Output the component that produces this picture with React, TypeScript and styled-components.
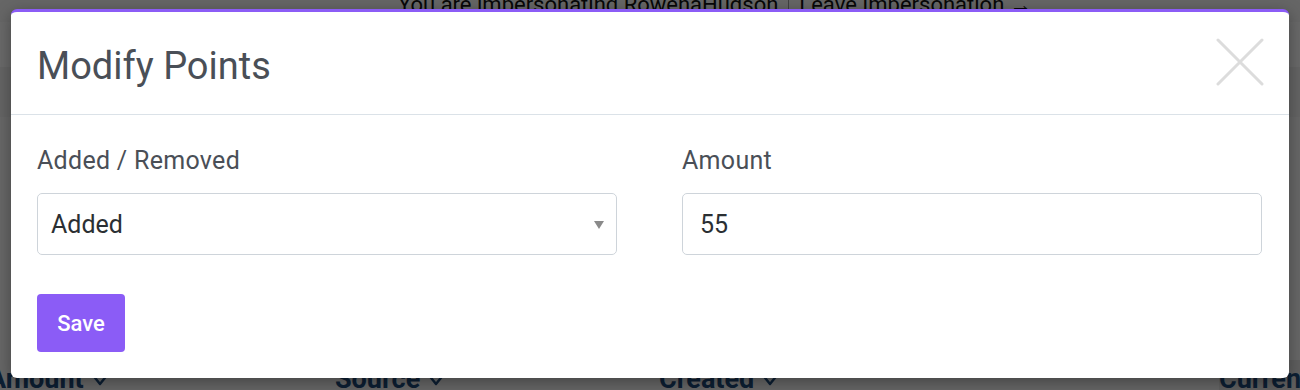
import React from "react";
import styled, { createGlobalStyle } from "styled-components";

const GlobalStyle = createGlobalStyle`
  html, body { margin: 0; padding: 0; background: #ffffff; }
  body { font-family: Roboto, "Liberation Sans", Arial, sans-serif; overflow: hidden; }
  * { box-sizing: border-box; }
`;

const Page = styled.div`
  width: 1300px;
  height: 390px;
  display: grid;
  grid-template-rows: 22px 1fr 30px;
  background: #f4f4f4;
  overflow: hidden;
  position: relative;
`;

const Banner = styled.div`
  display: flex;
  justify-content: flex-start;
  align-items: flex-end;
  gap: 10px;
  font-size: 22px;
  color: #111;
  line-height: 1;
  padding-left: 398px;
  margin-top: -8px;
  padding-bottom: 6px;
`;

const BannerSep = styled.span`
  border-left: 1px solid #999;
  height: 30px;
`;

const MainArea = styled.div`
  display: flex;
  justify-content: flex-end;
  align-items: flex-end;
  padding-bottom: 36px;
  background: linear-gradient(#fafafa 0 45px, #eeeeee 45px 95px, #f6f6f6 95px);
`;

const Burger = styled.div`
  display: flex;
  flex-direction: column;
  gap: 9px;
  width: 14px;
  span {
    display: block;
    height: 4px;
    background: #222;
  }
`;

const TableHead = styled.div`
  display: grid;
  grid-template-columns: 347px 324px 560px 1fr;
  align-items: end;
  margin-left: -12px;
  color: #1e4a7a;
  font-weight: 700;
  font-size: 27px;
  line-height: 1;
`;

const HeadCell = styled.div<{ $shade?: boolean }>`
  display: flex;
  align-items: center;
  gap: 6px;
  height: 30px;
  padding-top: 8px;
  background: ${(p) => (p.$shade ? "#e2e2e2" : "transparent")};
`;

const Overlay = styled.div`
  position: absolute;
  inset: 0;
  background: rgba(0, 0, 0, 0.58);
`;

const Modal = styled.div`
  position: absolute;
  left: 11px;
  top: 9px;
  width: 1278px;
  height: 369px;
  background: #ffffff;
  border-top: 3px solid #8b5cf6;
  border-radius: 6px;
  box-shadow: 0 4px 16px rgba(0, 0, 0, 0.35);
  display: flex;
  flex-direction: column;
  overflow: hidden;
`;

const Header = styled.div`
  height: 103px;
  flex: none;
  display: flex;
  align-items: center;
  justify-content: space-between;
  padding: 0 25px 0 26px;
  border-bottom: 1px solid #dbe2e8;
`;

const Title = styled.h2`
  margin: 0;
  font-size: 38px;
  font-weight: 400;
  color: #4a4f57;
  line-height: 1;
  padding-top: 6px;
`;

const CloseButton = styled.button`
  width: 48px;
  height: 48px;
  padding: 0;
  border: 0;
  background: none;
  cursor: pointer;
  margin-top: -3px;
  svg { display: block; }
`;

const Body = styled.div`
  flex: 1;
  padding: 28px 26px 26px 26px;
  display: flex;
  flex-direction: column;
`;

const FieldRow = styled.div`
  display: grid;
  grid-template-columns: 580px 580px;
  column-gap: 65px;
`;

const Field = styled.div`
  display: flex;
  flex-direction: column;
`;

const Label = styled.label`
  font-size: 25px;
  line-height: 36px;
  letter-spacing: 0.3px;
  color: #4a4f57;
  margin-bottom: 14px;
`;

const SelectBox = styled.div`
  height: 62px;
  border: 1px solid #ced4da;
  border-radius: 5px;
  display: flex;
  align-items: center;
  padding: 0 13px;
  font-size: 25px;
  color: #2b2f33;
`;

const Caret = styled.span`
  margin-left: auto;
  width: 0;
  height: 0;
  border-left: 5px solid transparent;
  border-right: 5px solid transparent;
  border-top: 8px solid #8a8a8a;
  margin-right: -1px;
  margin-top: 2px;
`;

const TextInput = styled.input`
  height: 62px;
  border: 1px solid #ced4da;
  border-radius: 5px;
  padding: 0 17px;
  font-family: Roboto, "Liberation Sans", Arial, sans-serif;
  font-size: 25px;
  color: #2b2f33;
  outline: none;
  width: 100%;
`;

const SaveButton = styled.button`
  margin-top: 39px;
  align-self: flex-start;
  width: 88px;
  height: 58px;
  border: 0;
  border-radius: 4px;
  background: #8b5cf6;
  color: #ffffff;
  font-family: Roboto, "Liberation Sans", Arial, sans-serif;
  font-size: 22px;
  font-weight: 500;
  cursor: pointer;
`;

const SortArrow = () => (
  <svg width="20" height="14" viewBox="0 0 20 14">
    <path d="M2 2 L18 2 L10 12 Z" fill="none" stroke="#1e4a7a" strokeWidth="2.5" strokeLinejoin="round" />
  </svg>
);

export default function App() {
  return (
    <>
      <GlobalStyle />
      <Page>
        <Banner>
          <span>You are impersonating RowenaHudson</span>
          <BannerSep />
          <span>Leave Impersonation →</span>
        </Banner>
        <MainArea>
          <Burger>
            <span />
            <span />
            <span />
          </Burger>
        </MainArea>
        <TableHead>
          <HeadCell>
            Amount <SortArrow />
          </HeadCell>
          <HeadCell>
            Source <SortArrow />
          </HeadCell>
          <HeadCell>
            Created <SortArrow />
          </HeadCell>
          <HeadCell $shade>Currency</HeadCell>
        </TableHead>
        <Overlay />
        <Modal role="dialog" aria-label="Modify Points">
          <Header>
            <Title>Modify Points</Title>
            <CloseButton aria-label="Close">
              <svg width="48" height="48" viewBox="0 0 48 48">
                <path d="M2 2 L46 46 M46 2 L2 46" stroke="#dcdcdc" strokeWidth="3" strokeLinecap="round" />
              </svg>
            </CloseButton>
          </Header>
          <Body>
            <FieldRow>
              <Field>
                <Label>Added / Removed</Label>
                <SelectBox>
                  <span>Added</span>
                  <Caret />
                </SelectBox>
              </Field>
              <Field>
                <Label>Amount</Label>
                <TextInput defaultValue="55" />
              </Field>
            </FieldRow>
            <SaveButton>Save</SaveButton>
          </Body>
        </Modal>
      </Page>
    </>
  );
}
